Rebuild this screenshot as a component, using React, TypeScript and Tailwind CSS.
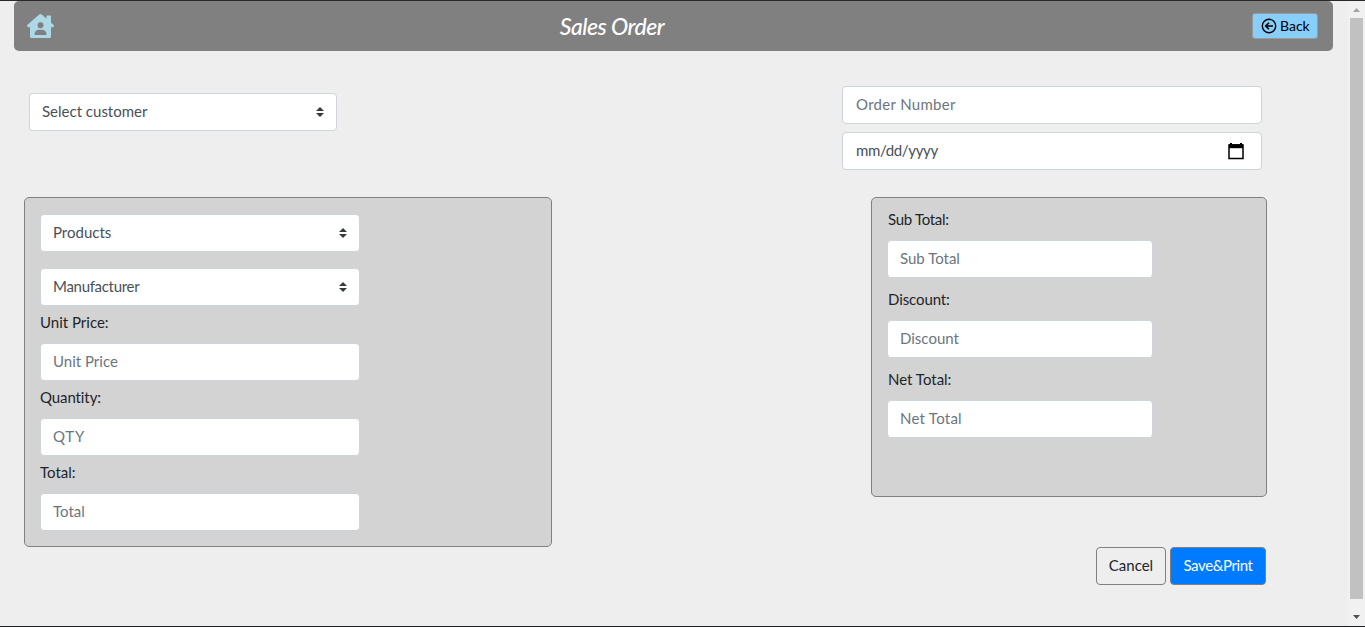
import type { ReactNode } from "react";
import { FaHouseUser } from "react-icons/fa";

const control =
  "flex h-[38px] items-center rounded border border-[#ced4da] bg-white px-3 text-[#495057]";

function Label({ children, className = "" }: { children: ReactNode; className?: string }) {
  return <label className={`mb-[9px] flex h-6 items-center text-[#212529] ${className}`}>{children}</label>;
}

function Field({ text, className }: { text: string; className: string }) {
  return (
    <input
      type="text"
      placeholder={text}
      className={`block h-[38px] shrink-0 rounded border border-[#ced4da] bg-white px-3 pb-0.5 outline-none placeholder:text-[#6c757d] ${className}`}
    />
  );
}

function Select({ text, className, track = "" }: { text: string; className: string; track?: string }) {
  return (
    <button type="button" className={`${control} justify-between ${className}`}>
      <span className={`pb-0.5 ${track}`}>{text}</span>
      <svg width="8" height="10" viewBox="0 0 4 5" fill="#343a40">
        <path d="M2 0L0 2h4zm0 5L0 3h4z" />
      </svg>
    </button>
  );
}

export default function App() {
  return (
    <div className="flex h-[627px] w-[1365px] overflow-hidden border-t border-b border-t-[#2b272b] border-b-[#202124] bg-[#eeeeee] font-['Gill_Sans_MT','Gill_Sans',Lato,sans-serif] text-[15px] leading-6">
      <main className="flex w-[1348px] flex-col pl-[14px]">
        <header className="flex h-[50px] w-[1319px] shrink-0 items-center justify-between rounded-[5px] bg-[#808080] pr-[15px] pl-[13px]">
          <FaHouseUser className="h-6 w-[27px] text-[#add8e6]" />
          <h1 className="mr-[82px] text-[23px] font-medium tracking-[-0.5px] text-white italic">Sales Order</h1>
          <button type="button" className="flex h-[26px] w-[66px] items-center gap-[3px] rounded-[3px] border border-[#999999] bg-[#87cefa] pl-2 text-[14px] text-black">
            <svg width="16" height="16" viewBox="0 0 16 16" fill="none" stroke="currentColor" className="shrink-0">
              <circle cx="8" cy="8" r="6.7" strokeWidth="1.4" />
              <path d="M12 8H5M8 4.7L4.7 8L8 11.3" strokeWidth="1.6" />
            </svg>
            <span>Back</span>
          </button>
        </header>

        <section className="mt-[35px] flex h-[84px] w-[1248px] shrink-0 justify-between pl-[15px]">
          <Select text="Select customer" className="mt-[7px] w-[308px]" />
          <div className="flex w-[420px] flex-col gap-2">
            <Field text="Order Number" className="w-full pl-[13px] tracking-[0.3px]" />
            <div className={`${control} justify-between pr-[17px] pl-[13px]`}>
              <span className="pb-0.5 tracking-[-0.35px]">mm/dd/yyyy</span>
              <svg width="16" height="18" viewBox="0 0 16 18" fill="none" stroke="black">
                <path d="M3 1v3M13 1v3" strokeWidth="2" />
                <path d="M1 3h14v13.5H1z" strokeWidth="1.5" />
                <path d="M1 4.2h14" strokeWidth="4" />
              </svg>
            </div>
          </div>
        </section>

        <section className="mt-[27px] flex w-[1253px] items-start justify-between pl-[10px]">
          <div className="flex h-[350px] w-[528px] flex-col rounded-[5px] border border-[#808080] bg-[#d3d3d3] pt-4 pl-[15px]">
            <Select text="Products" className="w-[320px] shrink-0" />
            <Select text="Manufacturer" className="mt-4 mb-1 w-[320px] shrink-0" track="tracking-[-0.3px]" />
            <Label>Unit Price:</Label>
            <Field text="Unit Price" className="mb-1 w-[320px]" />
            <Label className="tracking-[-0.1px]">Quantity:</Label>
            <Field text="QTY" className="mb-1 w-[320px] tracking-[0.8px]" />
            <Label>Total:</Label>
            <Field text="Total" className="w-[320px]" />
          </div>
          <div className="flex w-[396px] flex-col">
            <div className="flex h-[300px] flex-col rounded-[5px] border border-[#808080] bg-[#d3d3d3] pt-[9px] pl-[15px]">
              <Label className="pl-px tracking-[-0.3px]">Sub Total:</Label>
              <Field text="Sub Total" className="mb-[9px] w-[266px]" />
              <Label className="pl-px tracking-[-0.1px]">Discount:</Label>
              <Field text="Discount" className="mb-[9px] w-[266px]" />
              <Label className="pl-px">Net Total:</Label>
              <Field text="Net Total" className="w-[266px] tracking-[0.25px]" />
            </div>
            <div className="mt-[50px] mr-[1px] flex justify-end gap-1">
              <button type="button" className="h-[38px] w-[70px] rounded border border-[#808080] pb-0.5 text-[#212529]">Cancel</button>
              <button type="button" className="h-[38px] w-24 rounded border border-[#808080] bg-[#007bff] pb-0.5 tracking-[-0.4px] text-white">Save&amp;Print</button>
            </div>
          </div>
        </section>
      </main>
      <aside className="flex w-[17px] flex-col items-center bg-[#f1f1f1]">
        <div className="flex h-[17px] items-center">
          <svg width="7" height="4" viewBox="0 0 7 4" fill="#a3a3a3"><path d="M0 4L3.5 0L7 4z" /></svg>
        </div>
        <div className="h-[581px] w-[13px] bg-[#c1c1c1]" />
        <div className="flex h-[27px] items-center pt-2">
          <svg width="7" height="4" viewBox="0 0 7 4" fill="#505050"><path d="M0 0h7L3.5 4z" /></svg>
        </div>
      </aside>
    </div>
  );
}
